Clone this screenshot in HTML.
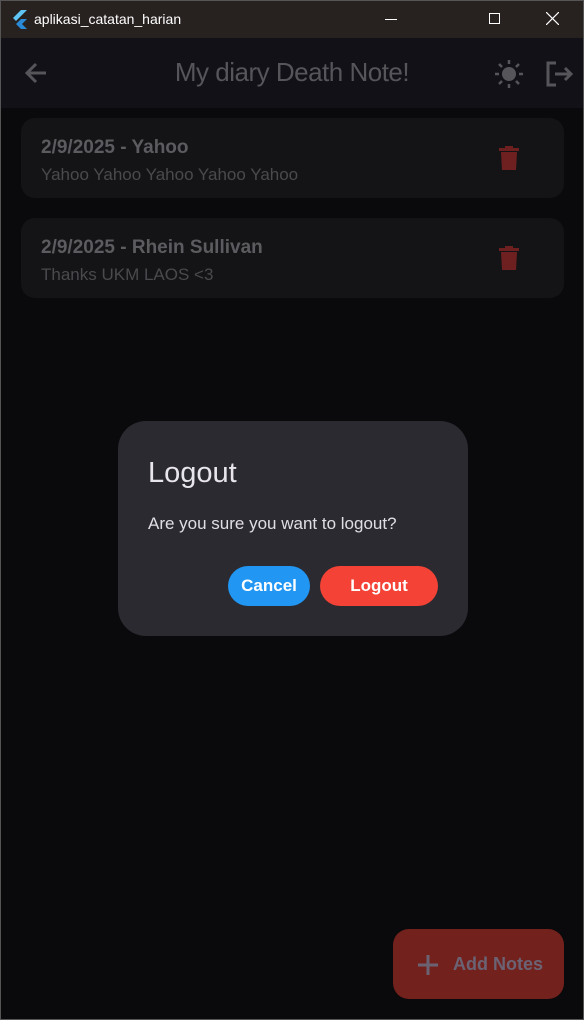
<!DOCTYPE html>
<html><head><style>
*{margin:0;padding:0;box-sizing:border-box}
body{width:584px;height:1020px;background:#0a0a0c;font-family:"Liberation Sans",sans-serif;position:relative;overflow:hidden}
.frame{position:absolute;left:0;top:0;width:584px;height:1020px;border:1px solid #555;pointer-events:none}
.tb{position:absolute;left:0;top:0;width:584px;height:38px;background:#272120;color:#fff;font-size:14px}
.ab{position:absolute;left:0;top:38px;width:584px;height:70px;background:#121118}
.card{position:absolute;left:21px;width:543px;height:80px;background:#141416;border-radius:14px}
.t{position:absolute;left:20px;top:19px;font-weight:bold;font-size:19px;color:#5c5c60}
.s{position:absolute;left:20px;top:47px;font-size:17px;color:#4a4a4e}
.dlg{position:absolute;left:118px;top:421px;width:350px;height:215px;background:#2b2a30;border-radius:28px}
.btn{position:absolute;top:145px;height:40px;border-radius:20px;color:#fff;font-weight:bold;font-size:17px;text-align:center;line-height:40px}
</style></head><body>
<div class="tb">
<svg style="position:absolute;left:11px;top:10px" width="18" height="20" viewBox="0 0 18 20"><path d="M10 0h6L5 11 2 8z" fill="#5ec5f5"/><path d="M10 9h6l-5 5 5 5h-6l-5-5z" fill="#2a8ad6"/></svg>
<span style="position:absolute;left:34px;top:11px">aplikasi_catatan_harian</span>
<div style="position:absolute;left:385px;top:19px;width:12px;height:1px;background:#fff"></div>
<div style="position:absolute;left:489px;top:13px;width:11px;height:11px;border:1px solid #fff"></div>
<svg style="position:absolute;left:546px;top:12px" width="13" height="13"><path d="M0 0L13 13M13 0L0 13" stroke="#fff" stroke-width="1.2"/></svg>
</div>
<div class="ab">
<svg style="position:absolute;left:24px;top:24px" width="24" height="22" viewBox="0 0 24 22"><path d="M22 11H3M12 2L3 11l9 9" stroke="#55555a" stroke-width="3" fill="none"/></svg>
<div style="position:absolute;left:0;width:584px;top:19px;text-align:center;font-size:26px;color:#55555a;letter-spacing:-0.5px">My diary Death Note!</div>
<svg style="position:absolute;left:495px;top:22px" width="28" height="28" viewBox="0 0 28 28"><circle cx="14" cy="14" r="7" fill="#55555a"/><g stroke="#55555a" stroke-width="2.5"><path d="M14 0v4M14 24v4M0 14h4M24 14h4M4 4l3 3M21 21l3 3M4 24l3-3M21 7l3-3"/></g></svg>
<svg style="position:absolute;left:545px;top:23px" width="28" height="26" viewBox="0 0 28 26"><path d="M11 2H3v22h8" stroke="#55555a" stroke-width="3" fill="none"/><path d="M10 13h16M20 7l6 6-6 6" stroke="#55555a" stroke-width="3" fill="none"/></svg>
</div>
<div class="card" style="top:118px"><div class="t">2/9/2025 - Yahoo</div><div class="s">Yahoo Yahoo Yahoo Yahoo Yahoo</div>
<svg style="position:absolute;left:478px;top:28px" width="20" height="24" viewBox="0 0 20 24"><path d="M6 0h8v2h6v3H0V2h6z" fill="#6e2020"/><path d="M2 6h16l-1 18H3z" fill="#6e2020"/></svg></div>
<div class="card" style="top:218px"><div class="t">2/9/2025 - Rhein Sullivan</div><div class="s">Thanks UKM LAOS &lt;3</div>
<svg style="position:absolute;left:478px;top:28px" width="20" height="24" viewBox="0 0 20 24"><path d="M6 0h8v2h6v3H0V2h6z" fill="#6e2020"/><path d="M2 6h16l-1 18H3z" fill="#6e2020"/></svg></div>
<div class="dlg">
<div style="position:absolute;left:30px;top:36px;font-size:29px;color:#e8e6ec">Logout</div>
<div style="position:absolute;left:30px;top:93px;font-size:17px;color:#e0dee4">Are you sure you want to logout?</div>
<div class="btn" style="left:110px;width:82px;background:#2196f3">Cancel</div>
<div class="btn" style="left:202px;width:118px;background:#f44336">Logout</div>
</div>
<div style="position:absolute;left:393px;top:929px;width:171px;height:70px;background:#73211c;border-radius:16px">
<svg style="position:absolute;left:25px;top:26px" width="20" height="20"><path d="M10 0v20M0 10h20" stroke="#6b6374" stroke-width="3"/></svg>
<div style="position:absolute;left:60px;top:25px;font-weight:bold;font-size:18px;color:#6b6374">Add Notes</div>
</div>
<div class="frame"></div>
</body></html>
